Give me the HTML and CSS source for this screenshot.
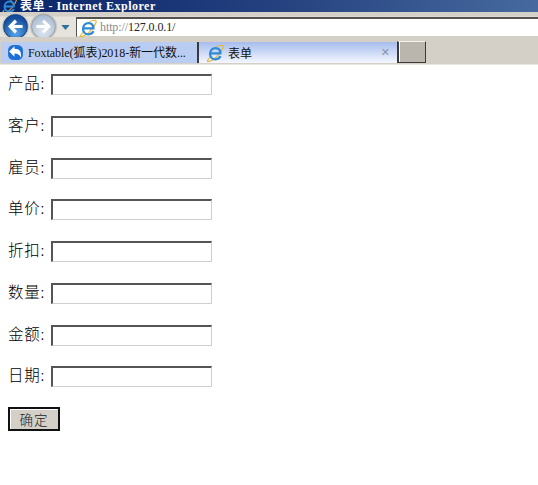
FILE: index.html
```html
<!DOCTYPE html>
<html lang="zh">
<head>
<meta charset="utf-8">
<title>表单</title>
<link rel="stylesheet" href="styles.css">
</head>
<body>
<svg class="defs" aria-hidden="true"><defs><symbol id="ie" viewBox="0 0 20 20"><path d="M4 15C1 19 1 20 3 19.5 8 19 17 10 19 3.5 19.5 1 17 .5 11.500 3" fill="none" stroke="#e6b82a" stroke-width="1.300"/><path d="M4.500 10.500H16C16 6.500 13.500 4.500 10.500 4.500 7 4.500 4.500 7.500 4.500 11 4.500 14.500 7 17 10.500 17 13 17 15 16 16 13.500" fill="none" stroke="#2f8ad6" stroke-width="2.500"/></symbol></defs></svg>
<header class="chrome">
  <div class="titlebar">
    <svg class="ie-icon title-icon"><use href="#ie"/></svg>
    <span class="title-text">表单 - Internet Explorer</span>
  </div>
  <div class="navbar">
    <button class="nav nav-back" aria-label="back"><svg viewBox="0 0 26 26"><path d="M21 13H8M13.500 6.500L7 13l6.500 6.500" fill="none" stroke="#fff" stroke-width="3.600"/></svg></button>
    <button class="nav nav-forward" aria-label="forward"><svg viewBox="0 0 26 26"><path d="M5 13h13M12.500 6.500L19 13l-6.500 6.500" fill="none" stroke="#fff" stroke-width="3.400"/></svg></button>
    <svg class="nav-drop" viewBox="0 0 10 6"><path d="M0 0h10L5 6z" fill="#2f6f9f"/></svg>
    <div class="address">
      <svg class="ie-icon"><use href="#ie"/></svg>
      <span class="url"><span class="url-dim">http://</span>127.0.0.1/</span>
    </div>
  </div>
  <div class="tabbar">
    <div class="tab tab-idle">
      <svg class="fox-icon" viewBox="0 0 16 16"><rect x="1" y="1" width="14" height="14" rx="5" fill="#1b6fd6"/><path d="M2 7l5-5v2.500c5 0 7 3 6 8.500-1-3-3-4-6-4V12z" fill="#fff"/></svg>
      <span class="tab-text">Foxtable(狐表)2018-新一代数...</span>
    </div>
    <div class="tab tab-active">
      <svg class="ie-icon"><use href="#ie"/></svg>
      <span class="tab-text">表单</span>
      <span class="tab-close">✕</span>
    </div>
    <div class="tab-new"></div>
  </div>
</header>
<form class="form">
  <label class="row"><span class="label">产品:</span><input class="field" type="text"></label>
  <label class="row"><span class="label">客户:</span><input class="field" type="text"></label>
  <label class="row"><span class="label">雇员:</span><input class="field" type="text"></label>
  <label class="row"><span class="label">单价:</span><input class="field" type="text"></label>
  <label class="row"><span class="label">折扣:</span><input class="field" type="text"></label>
  <label class="row"><span class="label">数量:</span><input class="field" type="text"></label>
  <label class="row"><span class="label">金额:</span><input class="field" type="text"></label>
  <label class="row"><span class="label">日期:</span><input class="field" type="text"></label>
  <button class="submit" type="button">确定</button>
</form>
</body>
</html>
```
FILE: styles.css
```css
* { box-sizing: border-box; }
html, body { margin: 0; padding: 0; background: #fff; }
body { height: 485px; overflow: hidden; font-family: "Noto Sans CJK SC", "Liberation Sans", sans-serif; }
.defs { display: none; }

.chrome { display: flex; flex-direction: column; }
.titlebar {
  height: 12px; display: flex; align-items: center; gap: 3px; padding-left: 1px;
  background: linear-gradient(90deg, #0a246a 0%, #24407e 50%, #466a9f 100%);
  overflow: hidden;
}
.ie-icon { width: 18px; height: 18px; flex: none; }
.title-icon { width: 16px; height: 16px; }
.title-text {
  color: #fff; font: bold 12px/12px "Liberation Serif", "Noto Sans CJK SC", serif; letter-spacing: .5px;
}
.navbar {
  height: 25px; display: flex; align-items: flex-end; padding-left: 3px;
  background: linear-gradient(#d4d0c8 0, #d4d0c8 4px, #e6e3dd 5px);
}
.nav {
  width: 25px; height: 25px; padding: 0; border-radius: 50%; flex: none;
  margin-bottom: -2px; box-shadow: 0 0 0 1px #c4c4c4;
}
.nav svg { display: block; width: 100%; height: 100%; }
.nav-back { background: radial-gradient(circle at 50% 78%, #5aa8ec, #134c9c 72%); border: 1px solid #123f7c; }
.nav-forward { background: radial-gradient(circle at 50% 72%, #dfe8f2, #a9bcd2 78%); border: 1px solid #9a9a9a; margin-left: 3px; }
.nav-drop { width: 9px; height: 5px; margin: 0 6px 7px 5px; flex: none; }
.address {
  flex: 1; height: 20px; display: flex; align-items: center; gap: 3px; padding-left: 2px;
  background: #fff; border-top: 2px solid #55534e; border-left: 1px solid #55534e;
  border-bottom: 1px solid #d4d0c8;
}
.url { font: 12px "Liberation Serif", serif; color: #222; letter-spacing: -.1px; }
.url-dim { color: #8a8a8a; }

.tabbar {
  height: 28px; display: flex; align-items: flex-end; padding: 0 0 1px 1px;
  background: #d4d0c8; border-bottom: 1px solid #e8e6e1;
}
.tab { height: 21px; width: 198px; display: flex; align-items: center; flex: none; }
.tab-idle {
  gap: 4px; padding-left: 6px; background: #b9cdf3;
  border-right: 2px solid #3a3a3a;
}
.tab-active {
  gap: 4px; padding: 0 7px; width: 198px;
  background: linear-gradient(#a6bdee, #f4f7fe);
}
.fox-icon { width: 17px; height: 17px; flex: none; }
.tab-text { font-size: 12px; line-height: 14px; color: #111; white-space: nowrap; font-family: "Liberation Serif", "Noto Sans CJK SC", serif; letter-spacing: -.05px; }
.tab-active .tab-text { font-size: 12px; font-family: "Noto Sans CJK SC", sans-serif; }
.tab-close { margin-left: auto; font: bold 11px "DejaVu Sans", sans-serif; color: #8b93a8; }
.tab-new {
  width: 29px; height: 22px; background: #bab6ae;
  border: 1px solid #3a3a3a; border-top: 1px solid #f4f3ef; border-left: 2px solid #3a3a3a;
  box-shadow: inset 1px 0 0 #fff;
}

.form { display: flex; flex-direction: column; align-items: flex-start; gap: 20.75px; padding: 9px 0 0 8px; }
.row { display: flex; align-items: center; height: 21px; }
.label { width: 43px; margin-top: -4px; font-size: 15.5px; font-weight: 300; line-height: 21px; color: #000; letter-spacing: .7px; white-space: nowrap; }
.field {
  width: 161px; height: 21px; padding: 0; background: #fff; outline: 0;
  border: 1px solid #cfcfcf; border-top: 2px solid #555; border-left: 2px solid #555;
}
.submit {
  width: 52px; height: 24px; margin-top: -1px; padding: 0; background: #d4d0c8; color: #222;
  font-size: 13.5px; font-weight: 300; line-height: 18px; letter-spacing: 1px; font-family: "Noto Sans CJK SC", sans-serif;
  border: 2px solid #111; box-shadow: inset 1px 1px 0 #fff;
}
```
